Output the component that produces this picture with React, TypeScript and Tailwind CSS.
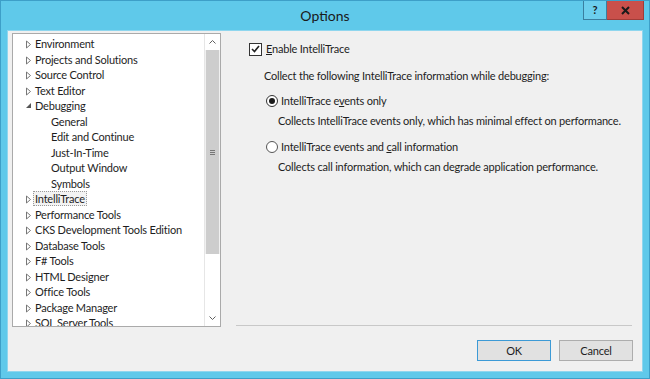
const tree: { label: string; level: number; open?: boolean; leaf?: boolean; selected?: boolean }[] = [
  { label: 'Environment', level: 0 },
  { label: 'Projects and Solutions', level: 0 },
  { label: 'Source Control', level: 0 },
  { label: 'Text Editor', level: 0 },
  { label: 'Debugging', level: 0, open: true },
  { label: 'General', level: 1, leaf: true },
  { label: 'Edit and Continue', level: 1, leaf: true },
  { label: 'Just-In-Time', level: 1, leaf: true },
  { label: 'Output Window', level: 1, leaf: true },
  { label: 'Symbols', level: 1, leaf: true },
  { label: 'IntelliTrace', level: 0, selected: true },
  { label: 'Performance Tools', level: 0 },
  { label: 'CKS Development Tools Edition', level: 0 },
  { label: 'Database Tools', level: 0 },
  { label: 'F# Tools', level: 0 },
  { label: 'HTML Designer', level: 0 },
  { label: 'Office Tools', level: 0 },
  { label: 'Package Manager', level: 0 },
  { label: 'SQL Server Tools', level: 0 },
];

const Arrow = ({ open }: { open?: boolean }) =>
  open ? (
    <svg width="8" height="8" viewBox="0 0 8 8" className="mt-[1px]">
      <path d="M6 1 L6 6 L1 6 Z" fill="#555" />
    </svg>
  ) : (
    <svg width="8" height="9" viewBox="0 0 8 9" className="mt-[2px]">
      <path d="M1.5 1 L5.5 4.5 L1.5 8 Z" fill="none" stroke="#777" strokeWidth="1" />
    </svg>
  );

export default function App() {
  return (
    <div
      className="w-[650px] h-[379px] bg-[#5fc9ea] border border-[#3d9fc8] flex flex-col overflow-hidden text-[#1e1e1e]"
      style={{ fontFamily: 'Lato, "Noto Sans", sans-serif' }}
    >
      {/* title bar */}
      <div className="h-[29px] flex shrink-0">
        <div className="flex-1 flex items-center justify-center pl-[66px] text-[14px] text-[#1a1a1a]">Options</div>
        <div className="flex items-start">
          <div className="w-[24px] h-[19px] border border-[#3a7fa0] border-t-0 bg-[#6ccfee] flex items-center justify-center text-[11px] font-bold text-[#1a1a1a]">
            ?
          </div>
          <div className="w-[37px] h-[19px] bg-[#c9504b] border border-[#a03c38] border-t-0 border-l-0 flex items-center justify-center mr-[5px]">
            <svg width="9" height="9" viewBox="0 0 9 9">
              <path d="M1 1 L8 8 M8 1 L1 8" stroke="#1a1a1a" strokeWidth="2" />
            </svg>
          </div>
        </div>
      </div>

      {/* client area */}
      <div className="flex-1 mx-[6px] mb-[6px] bg-[#f0f0f0] border border-[#8fd6ee] flex flex-col text-[11px] tracking-[-0.2px]">
        <div className="flex flex-1 pt-[2px]">
          {/* tree */}
          <div className="ml-[4px] w-[209px] h-[294px] border border-[#aaaaaa] bg-white flex">
            <div className="flex-1 pt-[2px] overflow-hidden">
              {tree.map((t) => (
                <div key={t.label} className="h-[15.5px] flex items-center whitespace-nowrap leading-[15px]">
                  <div className={t.level === 0 ? 'w-[22px] pl-[12px] flex items-center' : 'w-[38px]'}>
                    {!t.leaf && <Arrow open={t.open} />}
                  </div>
                  <span
                    className={
                      t.selected
                        ? 'px-[1px] -ml-[2px] border border-dotted border-[#9a9a9a] bg-[#f3f3f3] leading-[13px]'
                        : ''
                    }
                  >
                    {t.label}
                  </span>
                </div>
              ))}
            </div>
            {/* scrollbar */}
            <div className="w-[16px] border-l border-[#e6e6e6] bg-[#f0f0f0] flex flex-col">
              <div className="h-[16px] bg-white flex items-center justify-center">
                <svg width="7" height="4" viewBox="0 0 7 4">
                  <path d="M0.5 3.5 L3.5 0.5 L6.5 3.5" fill="none" stroke="#606060" strokeWidth="1" />
                </svg>
              </div>
              <div className="mx-[1px] h-[204px] bg-[#cdcdcd] flex items-center justify-center">
                <div className="flex flex-col gap-[1px]">
                  <div className="w-[5px] h-[1px] bg-[#777]" />
                  <div className="w-[5px] h-[1px] bg-[#777]" />
                  <div className="w-[5px] h-[1px] bg-[#777]" />
                </div>
              </div>
              <div className="flex-1 bg-white" />
              <div className="h-[16px] bg-white flex items-center justify-center">
                <svg width="7" height="4" viewBox="0 0 7 4">
                  <path d="M0.5 0.5 L3.5 3.5 L6.5 0.5" fill="none" stroke="#606060" strokeWidth="1" />
                </svg>
              </div>
            </div>
          </div>

          {/* right panel */}
          <div className="flex-1 flex flex-col pl-[15px] pr-[10px]">
            <div className="flex-1 pl-[13px] pt-[8px] whitespace-nowrap">
              <div className="flex items-center gap-[4px] h-[16px]">
                <div className="w-[13px] h-[13px] border border-[#333] bg-white flex items-center justify-center">
                  <svg width="9" height="8" viewBox="0 0 9 8">
                    <path d="M1 4 L3.5 6.5 L8 1" fill="none" stroke="#222" strokeWidth="1.6" />
                  </svg>
                </div>
                <span>
                  <span className="underline">E</span>nable IntelliTrace
                </span>
              </div>
              <div className="pl-[15px] pt-[11px]">
                <div className="h-[16px] leading-[16px]">Collect the following IntelliTrace information while debugging:</div>
                <div className="pl-[2px] pt-[9px]">
                  <div className="flex items-center gap-[3px] h-[16px]">
                    <div className="w-[12px] h-[12px] rounded-full border border-[#333] bg-white flex items-center justify-center">
                      <div className="w-[6px] h-[6px] rounded-full bg-[#1a1a1a]" />
                    </div>
                    <span>
                      IntelliTrace e<span className="underline">v</span>ents only
                    </span>
                  </div>
                  <div className="pl-[12px] pt-[4px] h-[20px] leading-[16px]">
                    Collects IntelliTrace events only, which has minimal effect on performance.
                  </div>
                  <div className="flex items-center gap-[3px] h-[16px] mt-[10px]">
                    <div className="w-[12px] h-[12px] rounded-full border border-[#555] bg-white" />
                    <span>
                      IntelliTrace events and <span className="underline">c</span>all information
                    </span>
                  </div>
                  <div className="pl-[12px] pt-[4px] h-[20px] leading-[16px]">
                    Collects call information, which can degrade application performance.
                  </div>
                </div>
              </div>
            </div>
            <div className="h-[1px] bg-[#c8c8c8] mb-[2px]" />
          </div>
        </div>

        {/* buttons */}
        <div className="h-[43px] flex items-start justify-end gap-[8px] pr-[9px] pt-[12px]">
          <button className="w-[74px] h-[21px] border border-[#3c9ad6] bg-[#e1e1e1] leading-[19px]">OK</button>
          <button className="w-[74px] h-[21px] border border-[#adadad] bg-[#e1e1e1] leading-[19px]">Cancel</button>
        </div>
      </div>
    </div>
  );
}
